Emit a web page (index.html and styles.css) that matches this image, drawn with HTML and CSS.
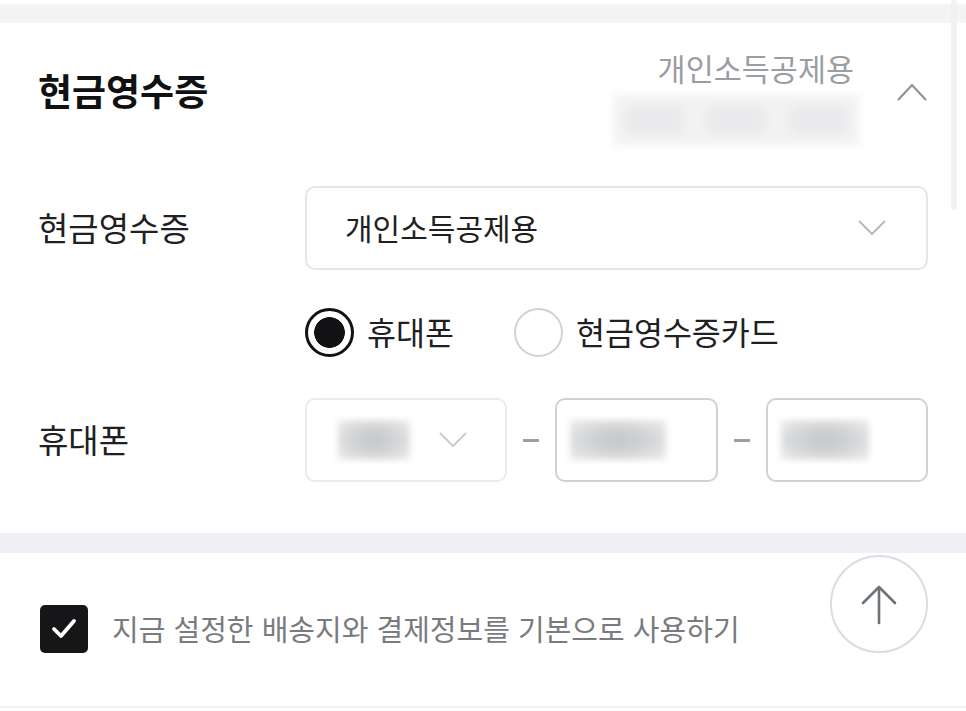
FILE: index.html
```html
<!DOCTYPE html>
<html lang="ko">
<head>
<meta charset="utf-8">
<title>현금영수증</title>
<link rel="stylesheet" href="styles.css">
</head>
<body>
<div class="page">
  <div class="gap-top"></div>
  <div class="band"></div>
  <section class="receipt">
    <div class="head">
      <h2 class="title">현금영수증</h2>
      <div class="summary">
        <div class="summary-text">개인소득공제용</div>
        <div class="summary-blur"><span></span><span></span><span></span></div>
      </div>
      <svg class="chev-up" width="32" height="20" viewBox="0 0 32 20"><polyline points="2,18 16,3 30,18" fill="none" stroke="#8f9298" stroke-width="2.2"/></svg>
    </div>

    <div class="row row-select">
      <div class="label">현금영수증</div>
      <div class="select">
        <span class="select-text">개인소득공제용</span>
        <svg width="30" height="18" viewBox="0 0 30 18"><polyline points="2,2 15,15 28,2" fill="none" stroke="#b9babd" stroke-width="2"/></svg>
      </div>
    </div>

    <div class="row row-radio">
      <div class="label"></div>
      <div class="radios">
        <label class="radio on"><span class="dot"></span><span class="radio-text">휴대폰</span></label>
        <label class="radio"><span class="dot"></span><span class="radio-text">현금영수증카드</span></label>
      </div>
    </div>

    <div class="row row-phone">
      <div class="label">휴대폰</div>
      <div class="phone">
        <div class="pbox pfirst">
          <div class="blur b1"></div>
          <svg width="30" height="18" viewBox="0 0 30 18"><polyline points="2,2 15,15 28,2" fill="none" stroke="#cbcccf" stroke-width="2"/></svg>
        </div>
        <span class="dash"></span>
        <div class="pbox"><div class="blur b2"></div></div>
        <span class="dash"></span>
        <div class="pbox"><div class="blur b3"></div></div>
      </div>
    </div>
  </section>
  <div class="band band2"></div>
  <footer class="foot">
    <label class="check">
      <span class="box"><svg width="30" height="24" viewBox="0 0 30 24"><polyline points="5,12 12,19 25,4" fill="none" stroke="#ffffff" stroke-width="3.8" stroke-linecap="round" stroke-linejoin="round"/></svg></span>
      <span class="check-text">지금 설정한 배송지와 결제정보를 기본으로 사용하기</span>
    </label>
    <button class="to-top" type="button" aria-label="맨 위로">
      <svg width="40" height="44" viewBox="0 0 40 44"><polyline points="4,21 20,5 36,21" fill="none" stroke="#6d7178" stroke-width="2.6" stroke-linecap="round" stroke-linejoin="round"/><line x1="20" y1="6" x2="20" y2="41" stroke="#6d7178" stroke-width="2.6" stroke-linecap="round"/></svg>
    </button>
  </footer>
  <div class="scrollbar"></div>
</div>
</body>
</html>
```

FILE: styles.css
```css
* { box-sizing: border-box; }
html, body { margin: 0; padding: 0; background: #ffffff; }
body {
  font-family: "Noto Sans CJK KR", "Noto Sans", sans-serif;
  color: #1b1b1d;
}
.page { position: relative; width: 966px; height: 711px; overflow: hidden; }
.gap-top { height: 4px; }
.band { height: 19px; background: #f3f4f6; }
.band2 { height: 20px; background: #eff0f3; }

.receipt { padding: 0 38px 51px 38px; }
.head { display: flex; align-items: flex-start; height: 138px; }
.title {
  margin: 45px 0 0 0;
  font-size: 37px; line-height: 44px; font-weight: 700;
  color: #111113;
  flex: 1;
}
.summary { margin-top: 27px; width: 245px; display: flex; flex-direction: column; align-items: flex-end; }
.summary-text {
  font-size: 30.5px; line-height: 36px; color: #9a9da3;
  padding-right: 5px;
}
.summary-blur {
  margin-top: 9px; width: 245px; height: 50px;
  background: #f2f2f3;
  display: flex; justify-content: space-around; align-items: center;
  filter: blur(5px);
}
.summary-blur span { width: 60px; height: 28px; background: #eaeaec; border-radius: 12px; }
.chev-up { margin: 59px 0 0 37px; display: block; }

.row { display: flex; align-items: center; }
.label { width: 267px; flex: none; font-size: 33px; color: #202022; padding-bottom: 3px; }
.row-select { margin-top: 25px; height: 84px; }
.select {
  flex: 1; height: 84px;
  border: 2px solid #e6e6e8; border-radius: 10px;
  display: flex; align-items: center; justify-content: space-between;
  padding: 0 39px 0 38px;
}
.select-text { font-size: 30px; color: #1f1f21; padding-bottom: 2px; }

.row-radio { margin-top: 37px; height: 50px; }
.radios { display: flex; align-items: center; gap: 60px; }
.radio { display: flex; align-items: center; gap: 13px; font-size: 31.5px; color: #202022; }
.radio-text { padding-bottom: 2px; }
.dot {
  width: 49px; height: 49px; border-radius: 50%;
  border: 2px solid #d2d2d4; background: #fff; flex: none;
}
.radio.on .dot {
  border: 3px solid #121214;
  background: radial-gradient(circle, #121214 0 15px, #ffffff 15.7px);
}

.row-phone { margin-top: 41px; height: 84px; }
.phone {
  flex: 1; display: grid;
  grid-template-columns: 202px 16px 1fr 16px 1fr;
  column-gap: 16px; align-items: center;
}
.pbox {
  height: 84px; border: 2px solid #d0d1d4; border-radius: 10px;
  position: relative; display: flex; align-items: center;
}
.pfirst { border-color: #ebebed; padding-left: 31px; }
.pfirst svg { margin-left: 28px; }
.dash { height: 3px; background: #9c9ea2; display: block; }
.blur {
  height: 40px;
  background: radial-gradient(ellipse at center, #c5c6c8 0%, #d3d4d6 45%, #eeeeef 100%);
  filter: blur(3px);
}
.b1 { width: 72px; }
.b2 { width: 96px; margin-left: 13px; }
.b3 { width: 88px; margin-left: 13px; }

.foot {
  position: relative; height: 155px;
  border-bottom: 2px solid #f1f1f3;
  padding: 52px 0 0 40px;
}
.check { display: flex; align-items: center; gap: 24px; }
.box {
  width: 48px; height: 48px; border-radius: 5px; background: #161618;
  display: flex; align-items: center; justify-content: center;
}
.check-text { font-size: 29px; color: #7a7b7e; padding-bottom: 2px; }
.to-top {
  position: absolute; top: 2px; right: 38px;
  width: 98px; height: 98px; border-radius: 50%;
  border: 2px solid #dcdcde; background: #fff;
  display: flex; align-items: center; justify-content: center; padding: 0;
}
.scrollbar {
  position: absolute; left: 951px; top: 0; width: 6px; height: 210px;
  background: #f1f1f2; border-radius: 3px;
}
```
